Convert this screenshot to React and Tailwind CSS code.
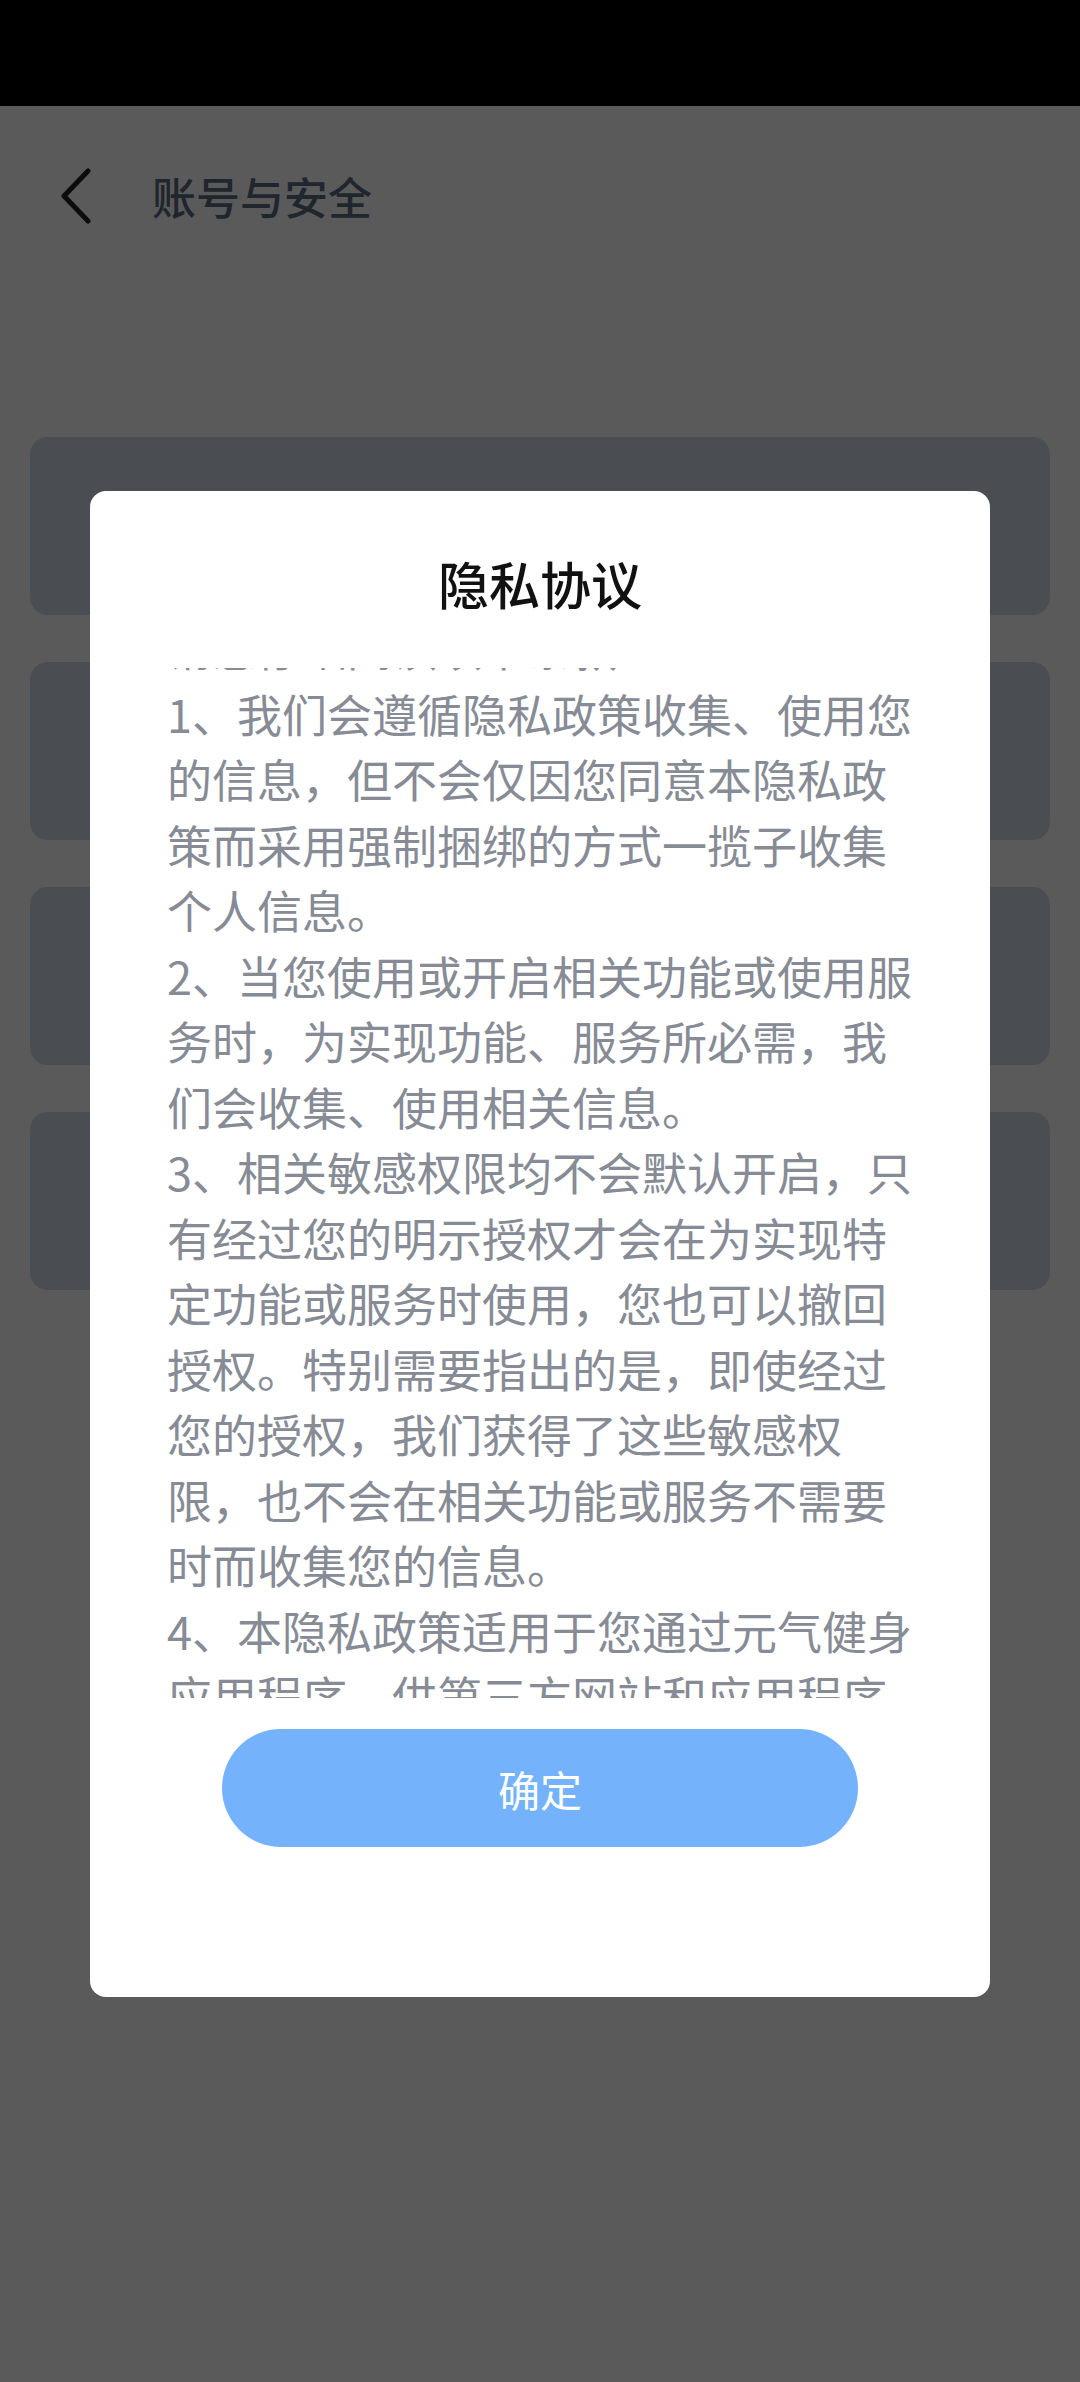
import React, { useLayoutEffect, useRef } from "react";

const paragraphs = [
  "请您仔细阅读以下条款：",
  "1、我们会遵循隐私政策收集、使用您的信息，但不会仅因您同意本隐私政策而采用强制捆绑的方式一揽子收集个人信息。",
  "2、当您使用或开启相关功能或使用服务时，为实现功能、服务所必需，我们会收集、使用相关信息。",
  "3、相关敏感权限均不会默认开启，只有经过您的明示授权才会在为实现特定功能或服务时使用，您也可以撤回授权。特别需要指出的是，即使经过您的授权，我们获得了这些敏感权限，也不会在相关功能或服务不需要时而收集您的信息。",
  "4、本隐私政策适用于您通过元气健身应用程序，供第三方网站和应用程序单独适用其各自的隐私政策，请您注意查阅。",
];

const font = { fontFamily: '"Noto Sans CJK SC", "Noto Sans", sans-serif' };

const App = () => {
  const scrollRef = useRef();

  // the agreement text is scrolled a little, the first line is cut off
  useLayoutEffect(() => {
    if (scrollRef.current) scrollRef.current.scrollTop = 53;
  }, []);

  return (
    <div className="relative w-[1080px] h-[2382px] overflow-hidden bg-[#5a5a5a]" style={font}>
      {/* status bar */}
      <div className="h-[106px] bg-black"></div>

      {/* header */}
      <div className="flex items-center h-[180px] pl-[60px]">
        <svg width="32" height="56" viewBox="0 0 32 56" fill="none">
          <polyline
            points="28,3 4,28 28,53"
            stroke="#0c0c0c"
            strokeWidth="5"
            strokeLinecap="round"
            strokeLinejoin="round"
          />
        </svg>
        <p className="ml-[60px] text-[44px] font-medium text-[#1f262e]">账号与安全</p>
      </div>

      {/* cards behind the dialog */}
      <div className="flex flex-col gap-[47px] px-[30px] mt-[151px]">
        <div className="h-[178px] rounded-[18px] bg-[#4a4d51]"></div>
        <div className="h-[178px] rounded-[18px] bg-[#4a4d51]"></div>
        <div className="h-[178px] rounded-[18px] bg-[#4a4d51]"></div>
        <div className="h-[178px] rounded-[18px] bg-[#4a4d51]"></div>
      </div>

      {/* privacy dialog */}
      <div className="absolute left-0 right-0 top-[106px] bottom-0 flex items-center justify-center">
        <div className="w-[900px] h-[1506px] bg-white rounded-[16px] flex flex-col items-center pt-[60px]">
          <p className="text-[51px] leading-[64px] font-medium text-[#111111]">隐私协议</p>
          <div
            ref={scrollRef}
            className="mt-[53px] ml-[-67px] mr-[-77px] w-[756px] h-[1030px] overflow-hidden text-[45px] leading-[65.5px] text-[#868b95]"
          >
            {paragraphs.map((text, idx) => (
              <p key={idx}>{text}</p>
            ))}
          </div>
          <button className="mt-[31px] w-[636px] h-[118px] rounded-full bg-[#74b3fc] text-white text-[42px]">
            确定
          </button>
        </div>
      </div>
    </div>
  );
};

export default App;
